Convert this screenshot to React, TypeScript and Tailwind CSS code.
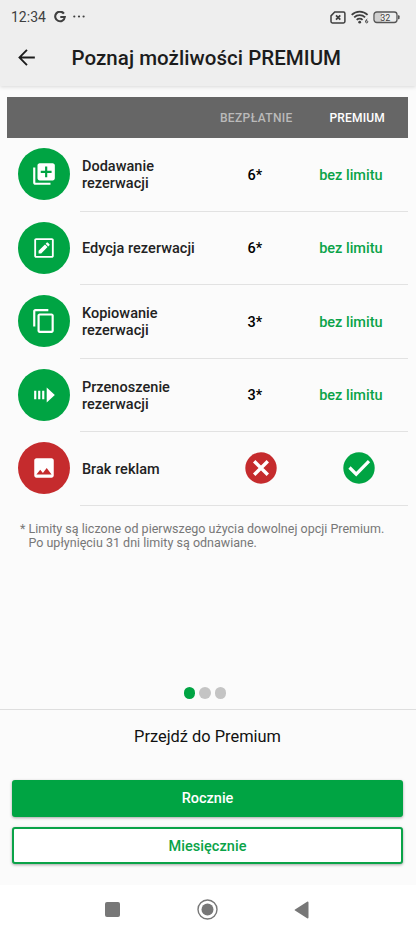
import type { ReactNode } from "react";

// ── Types ───────────────────────────────────────────────
interface Feature {
  id: string;
  label: string;
  icon: ReactNode;
  tone: "green" | "red";
  free?: string;
  premium?: string;
}

// ── Icons ───────────────────────────────────────────────
function Glyph({ d, size = 26, className = "" }: { d: string; size?: number; className?: string }) {
  return (
    <svg width={size} height={size} viewBox="0 0 24 24" fill="currentColor" className={`shrink-0 ${className}`}>
      <path d={d} />
    </svg>
  );
}

const ADD   = "M4 6H2v14c0 1.1.9 2 2 2h14v-2H4V6zm16-4H8c-1.1 0-2 .9-2 2v12c0 1.1.9 2 2 2h12c1.1 0 2-.9 2-2V4c0-1.1-.9-2-2-2zm-1 9h-4v4h-2v-4H9V9h4V5h2v4h4v2z";
const COPY  = "M16 1H4c-1.1 0-2 .9-2 2v14h2V3h12V1zm3 4H8c-1.1 0-2 .9-2 2v14c0 1.1.9 2 2 2h11c1.1 0 2-.9 2-2V7c0-1.1-.9-2-2-2zm0 16H8V7h11v14z";
const IMAGE = "M21 19V5c0-1.1-.9-2-2-2H5c-1.1 0-2 .9-2 2v14c0 1.1.9 2 2 2h14c1.1 0 2-.9 2-2zM8.5 13.5l2.5 3.01L14.5 12l4.5 6H5l3.5-4.5z";
const EDIT  = "M19.3 3H4.7C3.76 3 3 3.76 3 4.7v14.6c0 .94.76 1.7 1.7 1.7h14.6c.94 0 1.7-.76 1.7-1.7V4.7c0-.94-.76-1.7-1.7-1.7zm0 16.3H4.7V4.7h14.6v14.6zM7 14.6V17h2.4l5.9-5.9-2.4-2.4L7 14.6zm10-5.2c.25-.25.25-.62 0-.87l-1.5-1.5c-.25-.25-.62-.25-.87 0l-1.1 1.1 2.4 2.4L17 9.4z";
const MOVE  = "M2.9 8h2v8h-2zM6.6 8h2v8h-2zM10.3 8h2v8h-2zM14.5 5l7.5 7-7.5 7z";

const FEATURES: Feature[] = [
  { id: "add",  label: "Dodawanie rezerwacji",    icon: <Glyph d={ADD} />,   tone: "green", free: "6*", premium: "bez limitu" },
  { id: "edit", label: "Edycja rezerwacji",       icon: <Glyph d={EDIT} />,  tone: "green", free: "6*", premium: "bez limitu" },
  { id: "copy", label: "Kopiowanie rezerwacji",   icon: <Glyph d={COPY} />,  tone: "green", free: "3*", premium: "bez limitu" },
  { id: "move", label: "Przenoszenie rezerwacji", icon: <Glyph d={MOVE} />,  tone: "green", free: "3*", premium: "bez limitu" },
  { id: "ads",  label: "Brak reklam",             icon: <Glyph d={IMAGE} />, tone: "red" },
];

// ── Status bar ──────────────────────────────────────────
function StatusBar() {
  return (
    <div className="flex h-[34px] items-center pl-[11px] pr-4 text-[#3f3f3f]">
      <span className="w-[35px] whitespace-nowrap pt-px text-[14px]">12:34</span>
      <svg width="12" height="12" viewBox="0 0 12 12" fill="none" stroke="currentColor" strokeWidth="2.1" className="ml-[7.5px]">
        <path d="M9.9 2.6A4.8 4.8 0 1 0 10.8 6H6.3" />
      </svg>
      <svg width="13" height="4" viewBox="0 0 13 4" fill="currentColor" className="ml-[7px]">
        <circle cx="1.3" cy="1.5" r="1.1" />
        <circle cx="6" cy="1.5" r="1.1" />
        <circle cx="10.6" cy="1.5" r="1.1" />
      </svg>
      <div className="ml-auto flex items-center">
        <svg width="16" height="13" viewBox="0 0 16 13" fill="none" stroke="currentColor" strokeWidth="1.5">
          <path d="M4.7 1h8.8q1.4 0 1.4 1.4v8.1q0 1.4-1.4 1.4H2.4Q1 11.9 1 10.5V4.9z" />
          <path d="M6 4.4l4.3 4.2M10.3 4.4 6 8.6" strokeWidth="1.8" />
        </svg>
        <svg width="18" height="14" viewBox="0 0 18 14" fill="none" stroke="currentColor" strokeWidth="1.8" className="ml-[5px]">
          <path d="M.7 4.8a11.3 11.3 0 0 1 15.9 0M3.2 7.4a7.8 7.8 0 0 1 10.9 0M5.7 9.9a4.3 4.3 0 0 1 5.9 0" />
          <circle cx="8.7" cy="12.2" r="1.4" fill="currentColor" stroke="none" />
          <path d="M16.3 9q-1.6.8-1.7 2.7" strokeWidth=".9" />
          <circle cx="15.7" cy="11.8" r="1.1" strokeWidth=".9" />
        </svg>
        <svg width="27" height="13" viewBox="0 0 27 13" className="ml-[4px]">
          <rect x="2" y="2" width="7" height="9" fill="#d0d0d0" />
          <rect x="1" y="1" width="23" height="10.5" rx="2.8" fill="none" stroke="#555" strokeWidth="1.3" />
          <path d="M25 4.2h.6q1 0 1 1v2q0 1-1 1H25z" fill="#555" />
          <text x="12.3" y="9.5" textAnchor="middle" fontSize="9" fill="currentColor">32</text>
        </svg>
      </div>
    </div>
  );
}

// ── Table row ───────────────────────────────────────────
function FeatureRow({ feature }: { feature: Feature }) {
  return (
    <div className="flex h-[73.5px] pl-[10.4px]">
      <div
        className={`mt-[10px] flex size-[52px] shrink-0 items-center justify-center rounded-full text-white ${
          feature.tone === "green" ? "bg-[#00a443]" : "bg-[#c52b2d]"
        }`}
      >
        {feature.icon}
      </div>
      <div className="ml-[10.1px] flex flex-1 items-center border-b border-[#e2e2e2] pl-[2px] text-[14.5px] font-medium">
        <span className="w-[130px] pt-[2px] leading-[17px] tracking-[0.04px] text-[#222]">{feature.label}</span>
        <span className="flex w-[86px] justify-center text-black">
          {feature.free ? (
            <span className="pt-[3px]">{feature.free}</span>
          ) : (
            <svg width="32" height="32" viewBox="0 0 32 32" className="ml-[13px]">
              <circle cx="16" cy="16" r="15.7" fill="#c52b2d" />
              <path d="m9.2 9.2 13.6 13.6m0-13.6-13.6 13.6" stroke="#fff" strokeWidth="3.4" />
            </svg>
          )}
        </span>
        <span className="flex w-[106px] justify-center text-[#0aa348]">
          {feature.premium ? (
            <span className="pt-[3px]">{feature.premium}</span>
          ) : (
            <svg width="32" height="32" viewBox="0 0 32 32" className="ml-4">
              <circle cx="16" cy="16" r="15.7" fill="#00a443" />
              <path d="m6.5 15.5 6.7 6.7L26 9.2" fill="none" stroke="#fff" strokeWidth="3.2" />
            </svg>
          )}
        </span>
      </div>
    </div>
  );
}

export default function App() {
  return (
    <div className="flex h-[932px] w-[416px] flex-col overflow-hidden bg-[#fbfbfb] font-[Roboto,sans-serif]">
      <header className="h-[86px] shrink-0 bg-[#eee] shadow-[0_1px_4px_rgba(0,0,0,0.14)]">
        <StatusBar />
        <div className="flex h-[48px] items-center pl-[13.5px] text-[#1c1c1c]">
          <Glyph d="M20 11.1H7.4l5.7-5.8L11.8 4 4 12l7.8 8 1.3-1.3-5.7-5.8H20z" size={25} className="-mt-px" />
          <h1 className="ml-[33px] whitespace-nowrap text-[20.5px] font-medium tracking-[0.04px]">Poznaj możliwości PREMIUM</h1>
        </div>
      </header>

      <main className="flex flex-1 flex-col">
        <section className="ml-[7.4px] mr-[8.4px] mt-[10.6px]">
          <div className="flex h-[41.5px] items-center bg-[#666] pt-[2px] text-[12px] font-medium">
            <span className="ml-[212.5px] w-[74px] whitespace-nowrap tracking-[0.38px] text-[#bababa]">BEZPŁATNIE</span>
            <span className="ml-[35.5px] tracking-[0.2px] text-white">PREMIUM</span>
          </div>
          {FEATURES.map((f) => (
            <FeatureRow key={f.id} feature={f} />
          ))}
        </section>

        <div className="mt-[16px] flex gap-[3px] pl-[20px] text-[12.5px] leading-[14.5px] tracking-[0.01px] text-[#777]">
          <span>*</span>
          <p className="whitespace-nowrap">
            Limity są liczone od pierwszego użycia dowolnej opcji Premium.
            <br />
            Po upłynięciu 31 dni limity są odnawiane.
          </p>
        </div>

        <div className="mb-[10.5px] mt-auto flex justify-center gap-[4px] pr-[6px]">
          <span className="size-[11.5px] rounded-full bg-[#00a443]" />
          <span className="size-[11.5px] rounded-full bg-[#c4c4c4]" />
          <span className="size-[11.5px] rounded-full bg-[#c4c4c4]" />
        </div>
      </main>

      <section className="h-[176px] shrink-0 border-t border-[#dedede] pl-[12.4px] pr-[13.4px]">
        <p className="pt-[15px] text-center text-[16.4px] leading-[24px] text-[#111]">Przejdź do Premium</p>
        <button className="mt-[30.5px] block h-[37px] w-full rounded-[3px] bg-[#00a443] pt-px text-[14.5px] font-medium text-white shadow-[0_1px_3px_rgba(0,0,0,0.35)]">
          Rocznie
        </button>
        <button className="mt-[10.5px] block h-[37px] w-full rounded-[3px] border-2 border-[#0aa348] bg-white pt-[2px] text-[14.5px] font-medium tracking-[0.05px] text-[#0aa348] shadow-[0_1px_3px_rgba(0,0,0,0.35)]">
          Miesięcznie
        </button>
      </section>

      <nav className="flex h-[47px] shrink-0 items-center bg-white pl-[105px] pt-[2px] text-[#777]">
        <span className="size-[15px] rounded-[2px] bg-[#777]" />
        <svg width="21" height="21" viewBox="0 0 21 21" className="ml-[77px]">
          <circle cx="10.5" cy="10.5" r="9.5" fill="none" stroke="currentColor" strokeWidth="1.4" />
          <circle cx="10.5" cy="10.5" r="6" fill="currentColor" />
        </svg>
        <svg width="15" height="18" viewBox="0 0 15 18" fill="currentColor" className="ml-[76px]">
          <path d="M13.5.5q1 0 1 1v15q0 1-1 1L1 9.6q-1-.6 0-1.2z" />
        </svg>
      </nav>
    </div>
  );
}
